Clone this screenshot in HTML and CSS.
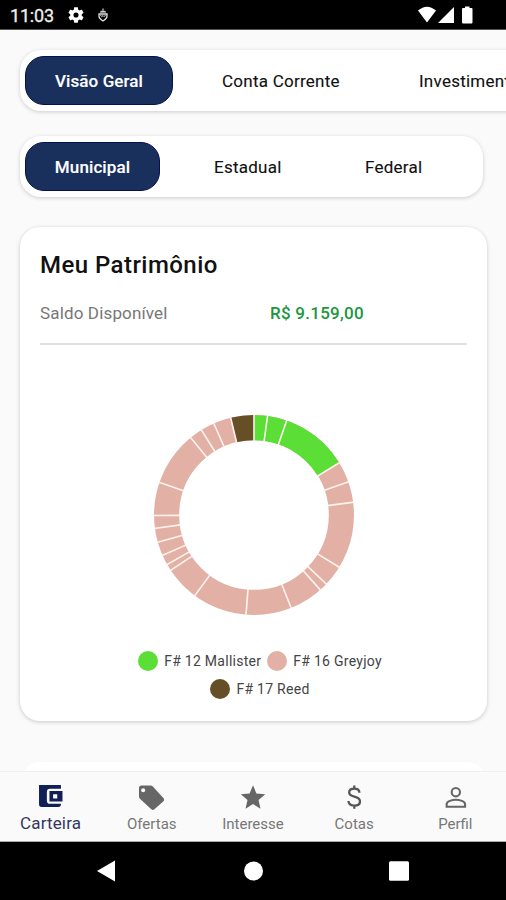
FILE: index.html
```html
<!DOCTYPE html>
<html lang="pt-BR">
<head>
<meta charset="utf-8">
<title>Carteira</title>
<link rel="stylesheet" href="styles.css">
</head>
<body>
<header class="status">
  <span class="time">11:03</span>
  <svg class="gear" viewBox="2 2 20 20"><path fill="#fff" fill-rule="evenodd" d="M19.14 12.94c.04-.3.06-.61.06-.94s-.02-.64-.07-.94l2.03-1.58c.18-.14.23-.41.12-.61l-1.92-3.32c-.12-.22-.37-.29-.59-.22l-2.39.96c-.5-.38-1.03-.7-1.62-.94l-.36-2.54c-.04-.24-.24-.41-.48-.41h-3.84c-.24 0-.43.17-.47.41l-.36 2.54c-.59.24-1.13.57-1.62.94l-2.39-.96c-.22-.08-.47 0-.59.22L2.74 8.87c-.12.21-.08.47.12.61l2.03 1.58c-.05.3-.09.63-.09.94s.02.64.07.94l-2.03 1.58c-.18.14-.23.41-.12.61l1.92 3.32c.12.22.37.29.59.22l2.39-.96c.5.38 1.03.7 1.62.94l.36 2.54c.05.24.24.41.48.41h3.84c.24 0 .44-.17.47-.41l.36-2.54c.59-.24 1.13-.56 1.62-.94l2.39.96c.22.08.47 0 .59-.22l1.92-3.32c.12-.22.07-.47-.12-.61zM12 15.200a3.200 3.200 0 1 1 0-6.400 3.200 3.200 0 0 1 0 6.400z"/></svg>
  <svg class="bug" viewBox="0 0 10 14"><path d="M3 5V2.800M5 5V.5M7 5V2.800M2.500 3.500h5" fill="none" stroke="#ccc" stroke-width="1.200"/><path d="M1 6h8v2.300c0 2-2 3.600-4 4.700-2-1.100-4-2.700-4-4.700z" fill="none" stroke="#ddd" stroke-width="1.300"/><path d="M2.500 7l1.300 1.700L5 7.500l1.200 1.200L7.500 7" fill="none" stroke="#ddd"/></svg>
  <svg class="signals" viewBox="0 0 56 18"><path fill="#fff" d="M0 4.600Q9-3 18 4.600L9 16.500zM20 17L36 1v16zM44 3q0-1 1-1h2V.500h4.500V2h2q1 0 1 1v13.200q0 1.300-1 1.300H45q-1 0-1-1.300z"/></svg>
</header>
<main class="content">
  <nav class="tabs tabs-wide">
    <span class="tab active t-geral">Visão Geral</span>
    <span class="tab t-conta">Conta Corrente</span>
    <span class="tab">Investimentos</span>
  </nav>
  <nav class="tabs tabs-fit">
    <span class="tab active t-mun">Municipal</span>
    <span class="tab t-est">Estadual</span>
    <span class="tab">Federal</span>
  </nav>
  <section class="card">
    <h1>Meu Patrimônio</h1>
    <div class="balance"><span class="label">Saldo Disponível</span><span class="value">R$ 9.159,00</span></div>
    <svg class="donut" viewBox="-101 -101 202 202">
      <g fill="none" stroke-width="25.200" transform="rotate(-90)">
        <circle r="87.400" stroke="#e2b0a5"/>
        <circle r="87.400" stroke="#5bde35" pathLength="360" stroke-dasharray="58.500 301.500"/>
        <circle r="87.400" stroke="#664e26" pathLength="360" stroke-dasharray="13.500 346.500" stroke-dashoffset="-346.500"/>
      </g>
      <g stroke="#fff3ee" stroke-width="1.600">
        <path d="M0-74V-101"/>
        <path d="M0-74V-101" transform="rotate(7.8)"/>
        <path d="M0-74V-101" transform="rotate(19.1)"/>
        <path d="M0-74V-101" transform="rotate(58.5)"/>
        <path d="M0-74V-101" transform="rotate(70.6)"/>
        <path d="M0-74V-101" transform="rotate(82.7)"/>
        <path d="M0-74V-101" transform="rotate(121.5)"/>
        <path d="M0-74V-101" transform="rotate(133.7)"/>
        <path d="M0-74V-101" transform="rotate(138.5)"/>
        <path d="M0-74V-101" transform="rotate(158.2)"/>
        <path d="M0-74V-101" transform="rotate(184.6)"/>
        <path d="M0-74V-101" transform="rotate(216.3)"/>
        <path d="M0-74V-101" transform="rotate(236.4)"/>
        <path d="M0-74V-101" transform="rotate(240.3)"/>
        <path d="M0-74V-101" transform="rotate(246.2)"/>
        <path d="M0-74V-101" transform="rotate(254.2)"/>
        <path d="M0-74V-101" transform="rotate(262.3)"/>
        <path d="M0-74V-101" transform="rotate(269.700)"/>
        <path d="M0-74V-101" transform="rotate(289)"/>
        <path d="M0-74V-101" transform="rotate(320.700)"/>
        <path d="M0-74V-101" transform="rotate(328.300)"/>
        <path d="M0-74V-101" transform="rotate(336.300)"/>
        <path d="M0-74V-101" transform="rotate(346.500)"/>
      </g>
    </svg>
    <div class="legend">
      <div class="legend-row"><span class="item"><i class="dot green"></i>F# 12 Mallister</span><span class="item"><i class="dot pink"></i>F# 16 Greyjoy</span></div>
      <div class="legend-row"><span class="item"><i class="dot brown"></i>F# 17 Reed</span></div>
    </div>
  </section>
  <section class="card card-next"></section>
</main>
<nav class="bottom">
  <div class="nav-item current">
    <svg viewBox="0 0 24 24"><path fill="#101f55" d="M1 1h21v3.500H11.500q-3 0-3 3v8.500q0 3 3 3H22v.500q0 2.500-2.500 2.500h-16Q1 22 1 19.500z"/><path fill="#101f55" fill-rule="evenodd" d="M11 6.800h12.500v10H11zM14.500 9.800v4h4v-4z"/></svg>
    <span>Carteira</span>
  </div>
  <div class="nav-item">
    <svg viewBox="0 0 24 24"><path fill="#666" fill-rule="evenodd" d="M23.600 12.800L13.500 1.700Q12.500.500 11 .500H2.500Q0 .500 0 3v8q0 1.300.9 2.300L11.800 23.200q1.500 1.400 3 0l8.700-7.600q1.400-1.400.1-2.800zM4 7a2 2 0 1 1 0-4 2 2 0 0 1 0 4z"/></svg>
    <span>Ofertas</span>
  </div>
  <div class="nav-item">
    <svg viewBox="0 0 24 24"><path fill="#666" d="M12.500 18.300l7.200 4.400-1.900-8.300 6.400-5.500-8.400-.8L12.500.300 9.200 8.100l-8.400.8 6.400 5.500-1.900 8.300z"/></svg>
    <span>Interesse</span>
  </div>
  <div class="nav-item">
    <svg viewBox="0 0 24 24"><path fill="none" stroke="#555" stroke-width="2.200" d="M16.700 7.500c0-2.700-2.200-4.100-5-4.100s-4.800 1.500-4.800 3.800c0 5.500 10.400 2.500 10.400 8.600 0 2.400-2.200 4-5.500 4s-5.500-1.500-5.600-4.400M11.800.500v3M11.800 19.500v3.200"/></svg>
    <span>Cotas</span>
  </div>
  <div class="nav-item">
    <svg viewBox="0 0 24 24"><g fill="none" stroke="#666" stroke-width="2"><circle cx="12.300" cy="6.900" r="4"/><path d="M3.500 20.800v-2.300c0-3 5.400-4.300 8.800-4.300s8.900 1.300 8.900 4.300v2.300z"/></g></svg>
    <span>Perfil</span>
  </div>
</nav>
<footer class="system">
  <svg viewBox="0 0 20 22"><path fill="#fff" d="M0 11L18 .500v21z"/></svg>
  <svg viewBox="0 0 20 22"><circle cx="10.500" cy="11" r="9.500" fill="#fff"/></svg>
  <svg viewBox="0 0 20 22"><rect y="1.300" width="20" height="19.400" rx="1.500" fill="#fff"/></svg>
</footer>
</body>
</html>
```
FILE: styles.css
```css
* { box-sizing: border-box; }
body {
  margin: 0;
  width: 506px;
  height: 900px;
  display: flex;
  flex-direction: column;
  overflow: hidden;
  background: #fafafa;
  font-family: Roboto, sans-serif;
  color: #111;
}
svg { display: block; flex: none; }
.status {
  height: 30px;
  flex: none;
  display: flex;
  align-items: center;
  padding: 2px 32px 0 10px;
  background: #000;
  border-bottom: 1px solid #555;
}
.time { color: #eee; font-size: 18px; width: 58px; letter-spacing: -.2px; -webkit-text-stroke: .3px #eee; }
.gear { width: 16px; height: 16px; margin-bottom: 1px; }
.bug { width: 10px; height: 14px; margin-left: 14px; margin-bottom: 1px; }
.signals { width: 56px; height: 18px; margin-left: auto; margin-bottom: 1px; }
.content {
  height: 741px;
  flex: none;
  overflow: hidden;
  padding: 20px 0 0 20px;
}
.tabs {
  display: flex;
  align-items: center;
  height: 61px;
  padding-left: 5px;
  background: #fff;
  border-radius: 21px;
  box-shadow: 0 1px 4px rgba(0, 0, 0, .18);
  font-size: 17px;
  white-space: nowrap;
}
.tabs-wide { width: 620px; }
.tabs-fit { width: 463px; margin-top: 25px; }
.tab {
  flex: none;
  font-weight: 400;
  letter-spacing: .25px;
  -webkit-text-stroke: .12px currentColor;
}
.active {
  height: 49px;
  line-height: 49px;
  text-align: center;
  color: #fff;
  background: #1a305c;
  border: 1px solid #07104e;
  border-radius: 19px;
  font-weight: 500;
  letter-spacing: .1px;
}
.t-geral { width: 148px; margin-right: 49px; }
.t-conta { width: 197px; }
.t-mun { width: 135px; margin-right: 54px; }
.t-est { width: 151px; }
.card {
  width: 467px;
  height: 494px;
  margin-top: 30px;
  padding: 20px 20px 0;
  background: #fff;
  border-radius: 20px;
  box-shadow: 0 1px 4px rgba(0, 0, 0, .2);
}
.card-next { margin-top: 41px; box-shadow: 0 2px 3px rgba(0, 0, 0, .1); }
h1 {
  margin: 0;
  font-size: 24px;
  line-height: 36px;
  font-weight: 500;
  letter-spacing: .45px;
}
.balance {
  display: flex;
  align-items: center;
  height: 62px;
  border-bottom: 2px solid #e0e0e0;
  font-size: 17px;
  letter-spacing: .15px;
}
.label { width: 230px; color: #777; }
.value { color: #1b973d; font-weight: 500; letter-spacing: .25px; }
.donut { width: 202px; height: 202px; margin: 69px 0 0 112.5px; }
.legend { margin-top: 31px; padding-left: 13px; font-size: 14px; letter-spacing: .27px; color: #444; }
.legend-row { display: flex; height: 28px; justify-content: center; }
.item { display: flex; align-items: center; height: 28px; margin: 0 3px; }
.dot { width: 20px; height: 20px; border-radius: 50%; margin-right: 6px; }
.green { background: #5bde35; }
.pink { background: #e2b0a5; }
.brown { background: #664e26; }
.bottom {
  height: 71px;
  flex: none;
  display: flex;
  background: #fafafa;
  border-top: 1px solid #f0f0f0;
  border-bottom: 1px solid #aaa;
}
.nav-item {
  width: 101.2px;
  display: flex;
  flex-direction: column;
  align-items: center;
  padding-top: 13px;
  color: #777;
  font-size: 15px;
}
.nav-item svg { width: 25px; height: 25px; }
.nav-item span { line-height: 20px; margin-top: 4px; }
.nav-item.current { color: #35365f; font-size: 17px; padding-top: 12px; letter-spacing: .15px; }
.system {
  height: 58px;
  flex: none;
  display: flex;
  align-items: center;
  padding: 0 97px;
  justify-content: space-between;
  background: #000;
}
.system svg { width: 20px; height: 22px; }
```
